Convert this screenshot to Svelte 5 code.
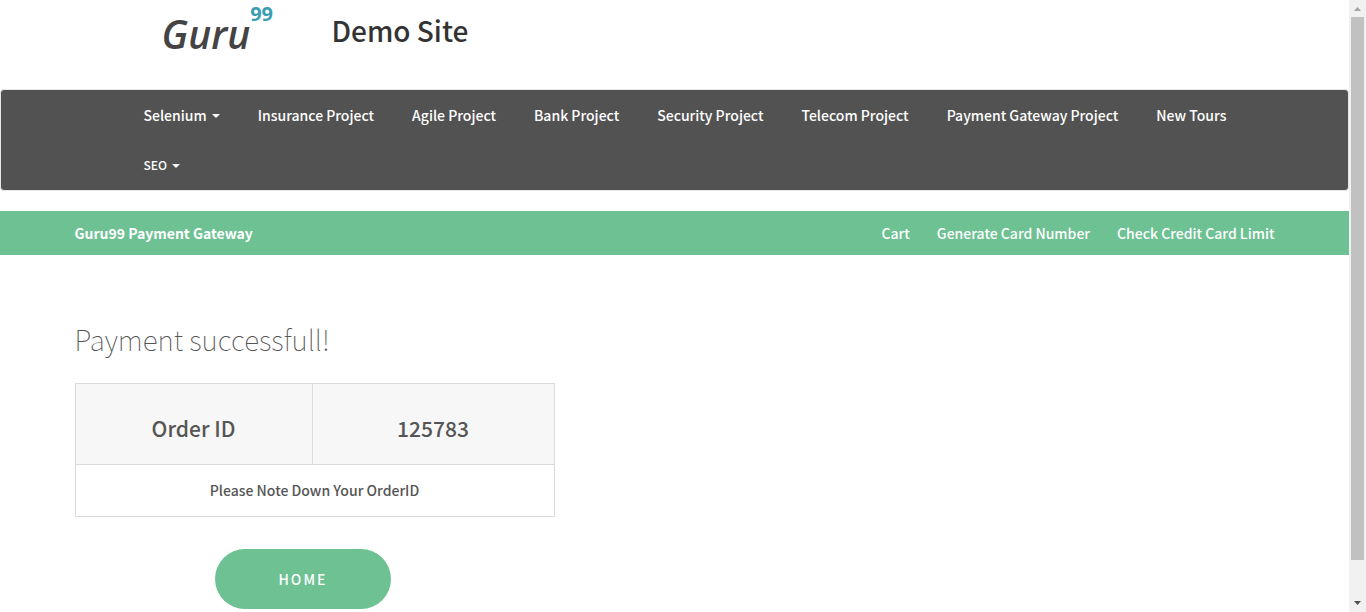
<script>
  const projects = [
    { label: 'Selenium', menu: true },
    { label: 'Insurance Project' },
    { label: 'Agile Project' },
    { label: 'Bank Project' },
    { label: 'Security Project' },
    { label: 'Telecom Project' },
    { label: 'Payment Gateway Project' },
    { label: 'New Tours' },
    { label: 'SEO', menu: true, small: true }
  ];
  const links = ['Cart', 'Generate Card Number', 'Check Credit Card Limit'];
</script>

<div class="window">
  <div class="page">
    <header class="masthead">
      <a class="logo" href="#home"><span class="word">Guru</span><sup>99</sup></a>
      <h2>Demo Site</h2>
    </header>

    <nav class="projects">
      <ul>
        {#each projects as item}
          <li>
            <a href="#project" class:small={item.small}>{item.label}{#if item.menu}<span class="caret"></span>{/if}</a>
          </li>
        {/each}
      </ul>
    </nav>

    <div class="gateway">
      <div class="inner bar">
        <a class="brand" href="#gateway">Guru99 Payment Gateway</a>
        <nav class="links">
          {#each links as link}
            <a href="#link">{link}</a>
          {/each}
        </nav>
      </div>
    </div>

    <main class="inner">
      <h1>Payment successfull!</h1>
      <div class="order">
        <table>
          <tbody>
            <tr class="head">
              <td class="key">Order ID</td>
              <td>125783</td>
            </tr>
            <tr>
              <td colspan="2">Please Note Down Your OrderID</td>
            </tr>
          </tbody>
        </table>
        <a class="button" href="#home">HOME</a>
      </div>
    </main>
  </div>

  <div class="scrollbar" aria-hidden="true">
    <svg width="17" height="17" viewBox="0 0 17 17"><path d="M5 11h7L8.500 7z" fill="#a3a3a3" /></svg>
    <div class="track"><div class="thumb"></div></div>
    <svg width="17" height="17" viewBox="0 0 17 17"><path d="M5 6h7L8.500 10z" fill="#505050" /></svg>
  </div>
</div>

<style>
  :global(body) {
    margin: 0;
    background: #fff;
  }

  .window {
    display: grid;
    grid-template-columns: minmax(0, 1fr) 17px;
    min-height: 100vh;
    font-family: 'Source Sans Pro', 'Noto Sans CJK SC', sans-serif;
    font-size: 14px;
    line-height: 20px;
    color: #555;
  }

  a {
    color: inherit;
    text-decoration: none;
  }

  h1,
  h2,
  ul {
    margin: 0;
    padding: 0;
  }

  .masthead {
    display: flex;
    align-items: flex-start;
    gap: 56px;
    box-sizing: border-box;
    max-width: 1170px;
    height: 89px;
    margin: 0 auto;
    padding-left: 72px;
  }

  .logo {
    display: flex;
    align-items: flex-start;
    min-width: 114px;
  }

  .word {
    font-family: 'Open Sans', sans-serif;
    font-size: 39px;
    font-style: italic;
    font-weight: 600;
    line-height: 68px;
    color: #444;
  }

  .logo sup {
    font-family: 'Open Sans', sans-serif;
    font-size: 20px;
    font-weight: 700;
    line-height: 28px;
    color: #3a9db5;
  }

  h2 {
    font-size: 28px;
    font-weight: 500;
    line-height: 60px;
    color: #333;
  }

  .projects {
    background: #525252;
    border: 1px solid #e7e7e7;
    border-radius: 4px;
  }

  .projects ul {
    display: flex;
    flex-wrap: wrap;
    box-sizing: border-box;
    max-width: 1170px;
    margin: 0 auto;
    padding-left: 35px;
    list-style: none;
  }

  .projects a {
    display: flex;
    align-items: center;
    padding: 15px 19px;
    font-weight: 500;
    color: #fff;
  }

  .projects a.small {
    font-size: 12px;
  }

  .caret {
    margin: 2px 0 0 5px;
    border: 4px solid transparent;
    border-top-color: #fff;
    border-bottom: 0;
  }

  .gateway {
    margin-top: 20px;
    background: #6dc193;
    color: #fff;
  }

  .inner {
    max-width: 1200px;
    margin: 0 auto;
  }

  .bar {
    display: flex;
    justify-content: space-between;
    line-height: 44px;
  }

  .brand {
    font-weight: 700;
  }

  .links {
    display: flex;
    gap: 27px;
    font-weight: 500;
  }

  main {
    padding-top: 64px;
  }

  h1 {
    font-size: 28px;
    font-weight: 100;
    line-height: 40px;
  }

  .order {
    display: flex;
    flex-direction: column;
    align-items: flex-start;
    max-width: 480px;
    margin-top: 24px;
  }

  table {
    width: 100%;
    border-collapse: collapse;
    font-weight: 500;
    text-align: center;
  }

  td {
    padding: 15px 16px 16px;
    border: 1px solid #dbdbdb;
  }

  .head td {
    padding: 29px 16px 21px;
    background: #f7f7f7;
    font-size: 21px;
    line-height: 30px;
  }

  .key {
    width: 204px;
  }

  .button {
    margin: 32px 0 0 140px;
    padding: 0 64px;
    border-radius: 30px;
    background: #6dc193;
    color: #fff;
    font-weight: 500;
    letter-spacing: 2px;
    line-height: 60px;
  }

  .scrollbar {
    position: sticky;
    top: 0;
    display: flex;
    flex-direction: column;
    height: 100vh;
    background: #f1f1f1;
  }

  .track {
    flex: 1;
    padding: 0 2px;
  }

  .thumb {
    height: 94%;
    background: #c1c1c1;
  }
</style>
